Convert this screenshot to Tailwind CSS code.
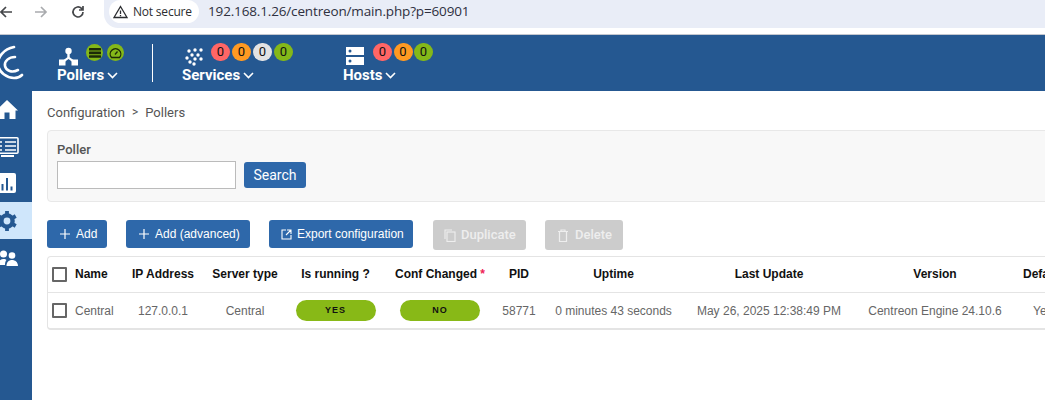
<!DOCTYPE html>
<html>
<head>
<meta charset="utf-8">
<script src="https://cdn.jsdelivr.net/npm/@tailwindcss/browser@4"></script>
</head>
<body class="w-[1045px] h-[400px] overflow-hidden bg-white font-['Roboto',sans-serif]">
<div class="flex h-[35px] items-start border-b border-[#c4c7cf] bg-white">
  <div class="flex items-center h-[24px] w-[104px] shrink-0 text-[#444746]">
    <svg class="ml-[-1px]" width="14" height="14" viewBox="0 0 14 14" fill="none" stroke="#45474a" stroke-width="1.7"><path d="M13 7H2M7 2L2 7l5 5"/></svg>
    <svg class="ml-[21px]" width="14" height="14" viewBox="0 0 14 14" fill="none" stroke="#a9abae" stroke-width="1.7"><path d="M1 7h11M7 2l5 5-5 5"/></svg>
    <svg class="ml-[23px]" width="14" height="14" viewBox="0 0 14 14" fill="none" stroke="#45474a" stroke-width="1.7"><path d="M12 7a5 5 0 1 1-1.5-3.6L12 5M12 1v4H8"/></svg>
  </div>
  <div class="flex-1 h-[28px] bg-[#e9edf7] rounded-bl-[14px] flex items-start pl-[5px]">
    <div class="h-[23px] w-[90px] bg-white rounded-full flex items-center pl-[4px] gap-[5px]">
      <svg width="15" height="14" viewBox="0 0 15 14" fill="none" stroke="#2b2d30" stroke-width="1.3"><path d="M7.5 1.5L14 12.5H1zM7.5 5.5v3.5M7.5 10v1.2"/></svg>
      <span class="text-[12px] text-[#2b2d30] font-['Open_Sans',sans-serif] leading-none tracking-[-0.2px]">Not secure</span>
    </div>
    <span class="ml-[9px] h-[23px] flex items-center text-[13.5px] text-[#2e3040] font-['Open_Sans',sans-serif] tracking-[-0.15px]">192.168.1.26/centreon/main.php?p=60901</span>
  </div>
</div>

<div class="flex h-[56px] bg-[#255891] text-white">
  <div class="w-[55px] shrink-0">
    <svg class="overflow-visible" width="30" height="56" viewBox="0 0 30 56" fill="none" stroke="#fff" stroke-width="2.6" stroke-linecap="round"><path d="M14 12C3 14-2 23-2 28c0 10 10 15 16 15 3 0 6-1 8-3"/><path d="M15 22C9 22 4 26 5 31c1 5 7 7 13 4"/></svg>
  </div>
  <div class="w-[97px] shrink-0 flex flex-col pt-[9px]">
    <div class="flex items-start h-[23px]">
      <svg class="mt-[3px] ml-[4px]" width="19" height="20" viewBox="0 0 19 20" fill="#fff"><circle cx="9.500" cy="4" r="3.200"/><path d="M8.300 6h2.400v4.300l4 3-1.300 1.600-3.900-3-3.900 3-1.300-1.600 4-3z"/><rect x="0" y="12.500" width="6.500" height="6"/><rect x="12.500" y="12.500" width="6.500" height="6"/></svg>
      <span class="ml-[8px] w-[17px] h-[17px] rounded-full bg-[#84b819] flex items-center justify-center"><svg width="12" height="10" viewBox="0 0 12 10" fill="#1c2a08"><rect y="0" width="12" height="2.600" rx="0.500"/><rect y="3.600" width="12" height="2.600" rx="0.500"/><rect y="7.200" width="12" height="2.600" rx="0.500"/></svg></span>
      <span class="ml-[4px] w-[17px] h-[17px] rounded-full bg-[#84b819] flex items-center justify-center"><svg width="13" height="12" viewBox="0 0 13 12" fill="none" stroke="#1c2a08" stroke-width="1.300"><path d="M2.500 10.500a5.300 5.300 0 1 1 8 0z"/><path d="M6 7.500l2.500-3"/></svg></span>
    </div>
    <div class="flex items-center gap-[3px] h-[16px] ml-[2px]"><span class="text-[15px] font-bold leading-none">Pollers</span><svg width="11" height="7" viewBox="0 0 11 7" fill="none" stroke="#fff" stroke-width="1.600"><path d="M1 1l4.500 4.500L10 1"/></svg></div>
  </div>
  <div class="w-px h-[38px] mt-[9px] bg-white shrink-0"></div>
  <div class="w-[190px] shrink-0 pl-[29px] flex flex-col pt-[9px]">
    <div class="flex items-start h-[23px]">
      <svg class="mt-[4px] ml-[3px]" width="18" height="18" viewBox="0 0 18 18" fill="#fff"><circle cx="4" cy="3" r="1.700"/><circle cx="10" cy="2" r="1.700"/><circle cx="16" cy="2" r="1.700"/><circle cx="7" cy="7" r="1.700"/><circle cx="13" cy="7" r="1.700"/><circle cx="2" cy="10" r="1.700"/><circle cx="10" cy="11" r="1.700"/><circle cx="16" cy="11" r="1.700"/><circle cx="5" cy="14" r="1.700"/><circle cx="9" cy="16" r="1.700"/></svg>
      <div class="ml-[8px] flex gap-[2px] mt-[-1px] text-[13px] text-[#111]">
        <span class="w-[19px] h-[18px] rounded-full bg-[#ff6666] flex items-center justify-center">0</span>
        <span class="w-[19px] h-[18px] rounded-full bg-[#ff9a22] flex items-center justify-center">0</span>
        <span class="w-[19px] h-[18px] rounded-full bg-[#e3e3e3] flex items-center justify-center">0</span>
        <span class="w-[19px] h-[18px] rounded-full bg-[#84b819] flex items-center justify-center">0</span>
      </div>
    </div>
    <div class="flex items-center gap-[3px] h-[16px]"><span class="text-[15px] font-bold leading-none">Services</span><svg width="11" height="7" viewBox="0 0 11 7" fill="none" stroke="#fff" stroke-width="1.600"><path d="M1 1l4.500 4.500L10 1"/></svg></div>
  </div>
  <div class="flex-1 flex flex-col pt-[9px]">
    <div class="flex items-start h-[23px]">
      <svg class="mt-[3px] ml-[3px]" width="18" height="18" viewBox="0 0 18 18"><rect width="18" height="8" fill="#fff"/><rect y="10" width="18" height="8" fill="#fff"/><circle cx="4" cy="4" r="1.500" fill="#255891"/><circle cx="4" cy="14" r="1.500" fill="#255891"/></svg>
      <div class="ml-[9px] flex gap-[1.500px] mt-[-1px] text-[13px] text-[#111]">
        <span class="w-[19px] h-[18px] rounded-full bg-[#ff6666] flex items-center justify-center">0</span>
        <span class="w-[19px] h-[18px] rounded-full bg-[#ff9a22] flex items-center justify-center">0</span>
        <span class="w-[19px] h-[18px] rounded-full bg-[#84b819] flex items-center justify-center">0</span>
      </div>
    </div>
    <div class="flex items-center gap-[2px] h-[16px]"><span class="text-[15px] font-bold leading-none">Hosts</span><svg width="11" height="7" viewBox="0 0 11 7" fill="none" stroke="#fff" stroke-width="1.600"><path d="M1 1l4.500 4.500L10 1"/></svg></div>
  </div>
</div>

<div class="flex h-[309px]">
  <div class="w-[32px] shrink-0 bg-[#255891] flex flex-col">
    <div class="h-[37px]">
      <svg width="32" height="37" viewBox="0 0 32 37" fill="#fff"><path d="M7 9L18 19.500H15.500V28H9.500V21.500H4.500V28H-2V19.500H-4Z"/></svg>
    </div>
    <div class="h-[37px]">
      <svg width="32" height="37" viewBox="0 0 32 37"><rect x="-3" y="9.800" width="21" height="15.500" rx="1" fill="none" stroke="#fff" stroke-width="1.600"/><path fill="#fff" d="M1 27h13v2H1z"/><path fill="none" stroke="#fff" stroke-width="1.500" d="M-2 14h4M5 14h11M-2 18h4M5 18h11M-2 22h4M5 22h11"/></svg>
    </div>
    <div class="h-[37px]">
      <svg width="32" height="37" viewBox="0 0 32 37"><rect x="-4" y="8" width="20" height="20" rx="2" fill="#fff"/><path fill="#255891" d="M1.500 19H3.500V25.500H1.500zM6 13H8V25.500H6zM10.500 21.500H12.500V25.500H10.500z"/></svg>
    </div>
    <div class="h-[37px] bg-[#cfe6fb]">
      <svg width="32" height="37" viewBox="0 0 32 37"><circle cx="7" cy="19" r="5.600" fill="none" stroke="#255891" stroke-width="4.400"/><path stroke="#255891" stroke-width="3.800" d="M7 9v3.500M7 25.500V29M-1.700 14l3 1.800M12.700 22.200l3 1.800M-1.700 24l3-1.800M12.700 15.800l3-1.800"/></svg>
    </div>
    <div class="h-[37px]">
      <svg width="32" height="37" viewBox="0 0 32 37" fill="#fff"><circle cx="3.500" cy="15" r="3.500"/><circle cx="12" cy="16.500" r="3.300"/><path d="M-2 26c0-4 3-6 5.500-6 1.500 0 2.500.5 3 1-1 1-1.500 2.500-1.500 5zM6.500 27c0-4 2.500-6 5.500-6s6 2 6 6z"/></svg>
    </div>
  </div>
  <div class="flex-1 min-w-0 pl-[15px]">
    <div class="h-[39px] flex items-start pt-[14px] text-[13px] leading-[15px] text-[#555]"><span>Configuration</span><span class="mx-[7px] text-[12px]">&gt;</span><span>Pollers</span></div>
    <div class="w-[1100px] h-[72px] bg-[#f8f8f8] border border-[#e8e8e8] rounded-[4px] pl-[9px] pt-[12px]">
      <div class="text-[13px] leading-[14px] font-medium text-[#555]">Poller</div>
      <div class="flex gap-[8px] mt-[4px]">
        <div class="w-[179px] h-[28px] bg-white border border-[#bbb]"></div>
        <div class="w-[62px] h-[26px] mt-[1px] rounded-[3px] bg-[#2e68aa] text-white text-[14px] flex items-center justify-center">Search</div>
      </div>
    </div>
    <div class="flex mt-[18px] text-[12px] text-white font-['Liberation_Sans',sans-serif]">
      <div class="w-[60px] h-[28px] rounded-[3px] bg-[#2e68aa] flex items-center pl-[13px] gap-[6px]"><svg width="10" height="10" viewBox="0 0 10 10" stroke="#fff" stroke-width="1.200"><path d="M5 0v10M0 5h10"/></svg>Add</div>
      <div class="ml-[19px] w-[124px] h-[28px] rounded-[3px] bg-[#2e68aa] flex items-center pl-[13px] gap-[6px]"><svg width="10" height="10" viewBox="0 0 10 10" stroke="#fff" stroke-width="1.200"><path d="M5 0v10M0 5h10"/></svg>Add (advanced)</div>
      <div class="ml-[19px] w-[144px] h-[28px] rounded-[3px] bg-[#2e68aa] flex items-center pl-[12px] gap-[5px]"><svg width="11" height="11" viewBox="0 0 11 11" fill="none" stroke="#fff" stroke-width="1.100"><path d="M5 1H1v9h9V6M6 1h4v4M10 1L5 6"/></svg>Export configuration</div>
      <div class="ml-[20px] w-[93px] h-[30px] rounded-[3px] bg-[#cccccc] flex items-center pl-[11px] gap-[5px] text-[13px] font-['Roboto',sans-serif] font-medium text-[#eeeeee]"><svg width="12" height="13" viewBox="0 0 12 13" fill="none" stroke="#eee" stroke-width="1.100"><path d="M8 1H1v9"/><rect x="3" y="3" width="8" height="9.500"/></svg>Duplicate</div>
      <div class="ml-[19px] w-[78px] h-[30px] rounded-[3px] bg-[#cccccc] flex items-center pl-[13px] gap-[7px] text-[13px] font-['Roboto',sans-serif] font-medium text-[#eeeeee]"><svg width="10" height="13" viewBox="0 0 10 13" fill="none" stroke="#eee" stroke-width="1.200"><path d="M0 2.500h10M3 2.500V1h4v1.500M1.500 2.500v10h7v-10"/></svg>Delete</div>
    </div>
    <div class="w-[1100px] mt-[6px] h-[74px] border border-[#e4e4e4] border-b-2 rounded-[4px] font-['Liberation_Sans',sans-serif]">
      <table class="table-fixed border-collapse w-[1100px]">
        <colgroup><col class="w-[27px]"><col class="w-[43px]"><col class="w-[90px]"><col class="w-[74px]"><col class="w-[107px]"><col class="w-[102px]"><col class="w-[56px]"><col class="w-[133px]"><col class="w-[178px]"><col class="w-[154px]"><col class="w-[136px]"></colgroup>
        <thead>
          <tr class="h-[35px] border-b border-[#e4e4e4] text-[12px] text-[#111]">
            <th class="p-0 text-left font-bold"><span class="block ml-[4px] w-[15px] h-[15px] border-2 border-[#666] rounded-[1px]"></span></th>
            <th class="p-0 text-left font-bold">Name</th>
            <th class="p-0 text-center font-bold">IP Address</th>
            <th class="p-0 text-center font-bold">Server type</th>
            <th class="p-0 text-center font-bold">Is running ?</th>
            <th class="p-0 text-center font-bold">Conf Changed <span class="text-[#ee2255]">*</span></th>
            <th class="p-0 text-center font-bold">PID</th>
            <th class="p-0 text-center font-bold">Uptime</th>
            <th class="p-0 text-center font-bold">Last Update</th>
            <th class="p-0 text-center font-bold">Version</th>
            <th class="p-0 text-left font-bold pl-[11px]">Default</th>
          </tr>
        </thead>
        <tbody>
          <tr class="h-[37px] text-[12px] text-[#666]">
            <td class="p-0"><span class="block ml-[4px] w-[15px] h-[15px] border-2 border-[#666] rounded-[1px]"></span></td>
            <td class="p-0">Central</td>
            <td class="p-0 text-center">127.0.0.1</td>
            <td class="p-0 text-center">Central</td>
            <td class="p-0"><span class="mx-auto flex w-[80px] h-[21px] rounded-full bg-[#88b917] items-center justify-center text-[9px] font-bold text-[#111] tracking-[1px]">YES</span></td>
            <td class="p-0"><span class="mx-auto flex w-[80px] h-[21px] rounded-full bg-[#88b917] items-center justify-center text-[9px] font-bold text-[#111] tracking-[1px]">NO</span></td>
            <td class="p-0 text-center">58771</td>
            <td class="p-0 text-center">0 minutes 43 seconds</td>
            <td class="p-0 text-center">May 26, 2025 12:38:49 PM</td>
            <td class="p-0 text-center">Centreon Engine 24.10.6</td>
            <td class="p-0 text-left pl-[21px]">Yes</td>
          </tr>
        </tbody>
      </table>
    </div>
  </div>
</div>
</body>
</html>
